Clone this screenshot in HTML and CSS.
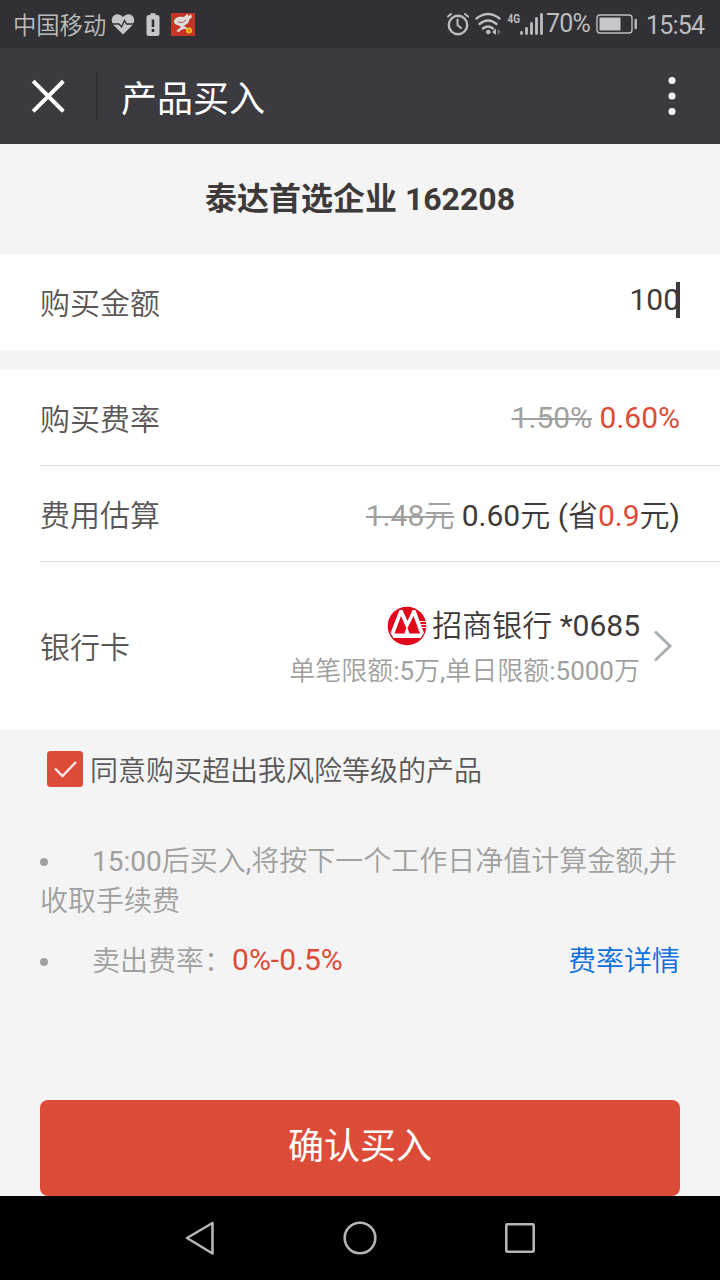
FILE: index.html
```html
<!DOCTYPE html>
<html lang="zh-CN">
<head>
<meta charset="utf-8">
<title>产品买入</title>
<link rel="stylesheet" href="styles.css">
</head>
<body>
<header class="status">
  <span class="carrier">中国移动</span>
  <svg class="status-left" width="90" height="48" viewBox="0 0 90 48">
    <path d="M16 34.500L6.500 25C1 17 10 10 16 17C22 10 31 17 25.500 25Z" fill="#c6c6c8"/>
    <path d="M4 24H12L14.500 27L17.500 20.500L19.500 24H28" fill="none" stroke="#313135" stroke-width="1.400"/>
    <path d="M43.500 13.200H48.500V15H43.500Z" fill="#c6c6c8"/>
    <rect x="39.500" y="15" width="13" height="21" rx="2.500" fill="#c6c6c8"/>
    <path d="M46 19.500V27M46 29V32" stroke="#313135" stroke-width="2.600"/>
    <rect x="64" y="13" width="24" height="23" fill="#c63426"/>
    <path d="M67 22C67 18 71 16 77 17L80 14L82 16L84 14L85 17L82 20C82 24 79 24 77 26L82 29L77 29L74 30L72 32L69 31L74 27C73 25 68 26 67 22Z" fill="#dedbd9"/>
    <path d="M71 22Q76 24 79 20" stroke="#a22d27" stroke-width=".8" fill="none"/>
    <circle cx="82" cy="30.500" r="3" fill="#f4bd16"/><circle cx="82" cy="30.500" r="1" fill="#ca671c"/>
  </svg>
  <svg class="status-signal" width="100" height="48" viewBox="0 0 100 48">
    <g fill="none" stroke="#bdbdbf" stroke-linecap="round">
      <circle cx="12" cy="25" r="9.200" stroke-width="2.400"/>
      <path d="M2 16.500L5 14M22 16.500L19 14M11.500 19.500V25L15 28" stroke-width="2"/>
      <path d="M30.500 18.500Q42 9.500 53.500 18.500M33.500 24Q42 17 50.500 24M37 28.500Q42 24.500 47 28.500" stroke-width="2.400"/>
    </g>
    <circle cx="42.300" cy="32" r="2.300" fill="#bdbdbf"/><path d="M50 28.500L46 32L50 35Z" fill="#bdbdbf"/><path d="M51.500 28.500L55 32L51.500 35Z" fill="#68686b"/>
    <text class="net" x="61.500" y="22.500" textLength="12.500" lengthAdjust="spacingAndGlyphs">4G</text>
    <path d="M75.500 32.500V33.500M80.500 28.500V33.500M85.500 23.500V33.500M90.500 18.500V33.500M95.500 14.500V33.500" fill="none" stroke="#bdbdbf" stroke-width="2.800" stroke-linecap="round"/>
  </svg>
  <span class="percent">70%</span>
  <svg class="battery" width="42" height="22" viewBox="0 0 42 22">
    <rect x="1" y="2" width="35" height="18" rx="3" fill="none" stroke="#bdbdbf" stroke-width="1.400"/>
    <rect x="3.500" y="4.500" width="21" height="13" fill="#c6c6c8"/>
    <path d="M39.700 6V16" stroke="#bdbdbf" stroke-width="2.400"/>
  </svg>
  <time class="time">15:54</time>
</header>
<nav class="bar">
  <svg class="close" width="96" height="96" viewBox="0 0 96 96"><path d="M34.500 34.500L62 62M62 34.500L34.500 62" stroke="#fff" stroke-width="3.900" stroke-linecap="square"/></svg>
  <i class="bar-split"></i>
  <h1 class="bar-title">产品买入</h1>
  <svg class="more" width="96" height="96" viewBox="0 0 96 96" fill="#fff"><circle cx="48" cy="32.500" r="3.500"/><circle cx="48" cy="48" r="3.500"/><circle cx="48" cy="63.500" r="3.500"/></svg>
</nav>
<main class="page">
  <h2 class="fund">泰达首选企业 162208</h2>
  <section class="panel">
    <div class="row amount"><span class="label">购买金额</span><span class="value">100</span><i class="caret"></i></div>
  </section>
  <section class="panel details">
    <div class="row"><span class="label">购买费率</span><span class="value"><s class="old">1.50%</s> <span class="hot">0.60%</span></span></div>
    <div class="row"><span class="label">费用估算</span><span class="value estimate"><s class="old">1.48<span class="zh">元</span></s> 0.60<span class="zh">元</span> (<span class="zh">省</span><span class="hot">0.9</span><span class="zh">元</span>)</span></div>
    <div class="row bank">
      <span class="label">银行卡</span>
      <div class="card">
        <div class="card-name">
          <svg class="logo" width="40" height="40" viewBox="0 0 40 40">
            <circle cx="20" cy="20" r="19.300" fill="#e2071d"/>
            <path d="M12.500 4H15.500L20.500 15L25.500 4H28.500L37 27L33.500 32H6.500L3.500 27Z" fill="#fff"/>
            <path d="M14 10L19.300 22L17.500 27.500H7.500ZM26.500 10L33 27.500H22.500L20.500 22Z" fill="#e2071d"/>
            <path d="M31 15.500H38.500M32.500 18.500H39M34 21.500H39" stroke="#fff" stroke-width="1"/>
          </svg>
          <span><span class="zh">招商银行</span> *0685</span>
        </div>
        <div class="limit"><span class="zh">单笔限额</span>:5<span class="zh">万</span>,<span class="zh">单日限额</span>:5000<span class="zh">万</span></div>
      </div>
      <svg class="arrow" width="20" height="34" viewBox="0 0 20 34"><path d="M2 2.500L17 17L2 31.500" fill="none" stroke="#a9b0b3" stroke-width="3"/></svg>
    </div>
  </section>
  <div class="agree">
    <svg width="36" height="36" viewBox="0 0 36 36"><rect width="36" height="36" rx="3.500" fill="#dd4b39"/><path d="M8 17.500L15.500 25L29 11" fill="none" stroke="#fbe9e7" stroke-width="2.400"/></svg>
    <span class="zh">同意购买超出我风险等级的产品</span>
  </div>
  <ul class="notes">
    <li class="note">15:00<span class="zh">后买入</span>,<span class="zh">将按下一个工作日净值计算金额</span>,<span class="zh">并收取手续费</span></li>
    <li class="note sell"><span class="zh">卖出费率：</span><span class="hot rate">0%-0.5%</span><a class="link">费率详情</a></li>
  </ul>
  <button class="submit" type="button">确认买入</button>
</main>
<footer class="keys">
  <svg width="720" height="84" viewBox="0 0 720 84" fill="none" stroke="#b5b5b5" stroke-width="2.600" stroke-linejoin="round"><path d="M212.500 27V57.500L187 42Z"/><circle cx="360" cy="42" r="15.300"/><rect x="506.300" y="28.300" width="27.400" height="27.400" rx="1"/></svg>
</footer>
</body>
</html>
```
FILE: styles.css
```css
* { box-sizing: border-box; }
body {
  margin: 0;
  width: 720px;
  height: 1280px;
  overflow: hidden;
  display: flex;
  flex-direction: column;
  background: #f4f4f4;
  color: #3d3a39;
  font-family: Roboto, "Noto Sans CJK SC", sans-serif;
  font-size: 30px;
}
svg { display: block; flex: none; }
h1, h2, ul { margin: 0; padding: 0; }
.zh, .label, .link { font-weight: 350; }
.status { height: 48px; display: flex; align-items: center; background: #313135; color: #bdbdbf; padding-left: 13px; line-height: 48px; }
.carrier { width: 94px; height: 48px; font-size: 23.300px; font-weight: 350; line-height: 53px; white-space: nowrap; }
.status-signal { margin-left: 249px; }
.net { font: bold 12px Roboto, sans-serif; fill: #bdbdbf; }
.percent { width: 48px; font-size: 25px; letter-spacing: -.8px; line-height: 48px; height: 48px; white-space: nowrap; }
.battery { margin-left: 2px; }
.time { margin-left: 8px; font-size: 25px; letter-spacing: -.8px; padding-top: 3px; }
.bar { height: 96px; display: flex; align-items: center; background: #3a3a3f; color: #fff; }
.bar-split { width: 2px; height: 48px; background: #303034; }
.bar-title { flex: 1; height: 96px; margin-left: 23px; font-size: 36px; font-weight: 400; line-height: 104px; }
.page { height: 1052px; display: flex; flex-direction: column; }
.fund { height: 110px; font-size: 32px; font-weight: 700; line-height: 110px; text-align: center; }
.panel { background: #fff; padding-left: 40px; }
.details { margin-top: 20px; }
.row { display: flex; align-items: center; justify-content: space-between; height: 96px; padding-right: 40px; line-height: 96px; }
.details .row:not(:last-child) { border-bottom: 1px solid #dedede; }
.label { height: 96px; line-height: 99px; color: #595757; }
.value { height: 96px; line-height: 96px; }
.estimate { line-height: 99px; }
.amount { position: relative; }
.amount .value { line-height: 92px; }
.caret { position: absolute; right: 40px; top: 28px; width: 4px; height: 36px; background: #3d3a39; }
.old { color: #9fa0a0; text-decoration-thickness: 2px; }
.hot { color: #dd4b39; }
.details .bank { height: 168px; padding-right: 47px; }
.card { margin-left: auto; padding-top: 3px; text-align: right; }
.card-name { display: flex; justify-content: flex-end; align-items: center; gap: 5px; height: 44px; line-height: 44px; }
.limit { height: 44px; line-height: 46px; font-size: 26px; color: #9fa0a0; }
.arrow { margin-left: 13px; }
.agree { height: 78px; display: flex; align-items: center; gap: 7px; padding-left: 47px; font-size: 28px; color: #595757; }
.notes { list-style: none; padding: 34px 40px 0; font-size: 28px; line-height: 40px; color: #9fa0a0; }
.note::before { content: ""; display: inline-block; width: 8px; height: 8px; margin-right: 44px; border-radius: 50%; background: #9fa0a0; vertical-align: 5px; }
.sell { display: flex; align-items: center; margin-top: 20px; }
.rate { font-size: 30px; line-height: 36px; padding-bottom: 4px; }
.link { margin-left: auto; color: #0b6fe0; }
.submit { height: 96px; margin: auto 40px 0; border: 0; border-radius: 8px; background: #dd4b39; color: #fff; font: 400 36px/86px Roboto, "Noto Sans CJK SC", sans-serif; padding-bottom: 4px; }
.keys { height: 84px; background: #000; }
```
